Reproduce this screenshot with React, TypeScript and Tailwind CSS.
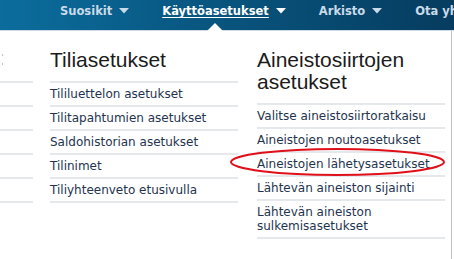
import React from 'react';

const navItems = [
  { label: 'Suosikit', active: false },
  { label: 'Käyttöasetukset', active: true },
  { label: 'Arkisto', active: false },
  { label: 'Ota yhteyttä', active: false },
];

const columns = [
  {
    title: 'Tiliasetukset',
    links: [
      'Tililuettelon asetukset',
      'Tilitapahtumien asetukset',
      'Saldohistorian asetukset',
      'Tilinimet',
      'Tiliyhteenveto etusivulla',
    ],
  },
  {
    title: 'Aineistosiirtojen asetukset',
    links: [
      'Valitse aineistosiirtoratkaisu',
      'Aineistojen noutoasetukset',
      'Aineistojen lähetysasetukset',
      'Lähtevän aineiston sijainti',
      'Lähtevän aineiston sulkemisasetukset',
    ],
  },
];

const Caret: React.FC<{ light?: boolean }> = ({ light }) => (
  <svg width="10" height="6" viewBox="0 0 10 6" className="shrink-0">
    <path d="M0 0 H10 L5 5.5 Z" fill={light ? '#ffffff' : '#c9dbe9'} />
  </svg>
);

const App: React.FC = () => {
  return (
    <div className="relative w-[454px] h-[259px] overflow-hidden bg-white font-['DejaVu_Sans',sans-serif]">
      {/* top nav */}
      <div className="relative h-[31px] bg-gradient-to-r from-[#0b6d9d] to-[#063c5f] border-b border-[#cfdbe4]">
        <div className="flex items-start gap-[33px] pl-[60px] pt-[4px] whitespace-nowrap">
          {navItems.map((item) => (
            <div key={item.label} className="flex items-center gap-[7px]">
              <span
                className={`text-[11.5px] font-bold leading-[14px] ${
                  item.active ? 'text-white underline underline-offset-[2px]' : 'text-[#c9dbe9]'
                }`}
              >
                {item.label}
              </span>
              {item.label !== 'Ota yhteyttä' && <Caret light={item.active} />}
            </div>
          ))}
        </div>
        <div className="absolute left-[207px] bottom-[-1px] w-0 h-0 border-l-[8px] border-r-[8px] border-b-[8px] border-l-transparent border-r-transparent border-b-white" />
      </div>

      {/* dropdown panel */}
      <div className="flex w-[452px] h-[228px] border-r border-[#b9bfc5] pt-[18px]">
        <div className="w-[33px] shrink-0 flex flex-col">
          <div className="h-[32px] pl-[2px] flex flex-col gap-[7px] pt-[5px]">
            <span className="block w-px h-[2px] bg-[#b6c4d2]" />
            <span className="block w-px h-[2px] bg-[#b6c4d2]" />
          </div>
          {[0, 1, 2, 3, 4].map((i) => (
            <div key={i} className="h-[24px] border-t-2 border-[#e6e9ec]" />
          ))}
          <div className="border-t-2 border-[#e6e9ec]" />
        </div>

        <div className="flex gap-[19px] ml-[17px]">
          {columns.map((col) => (
            <div key={col.title} className="w-[188px] flex flex-col">
              <h3 className="text-[21px] leading-[22px] text-[#1b1b1b] font-['Liberation_Sans',Arial,sans-serif] mb-[10px]">
                {col.title}
              </h3>
              {col.links.map((link) => (
                <a
                  key={link}
                  className="block border-t-2 border-[#e6e9ec] pt-[4px] pb-[4px] text-[12px] leading-[14px] text-[#24344f]"
                >
                  {link}
                </a>
              ))}
              <div className="border-t-2 border-[#e6e9ec]" />
            </div>
          ))}
        </div>
      </div>

      {/* annotation ellipse */}
      <svg className="absolute left-[229px] top-[147px]" width="217" height="30" viewBox="0 0 217 30">
        <ellipse cx="108.5" cy="15" rx="106.5" ry="13" fill="none" stroke="#e0101a" strokeWidth="2" />
      </svg>
    </div>
  );
};

export default App;
